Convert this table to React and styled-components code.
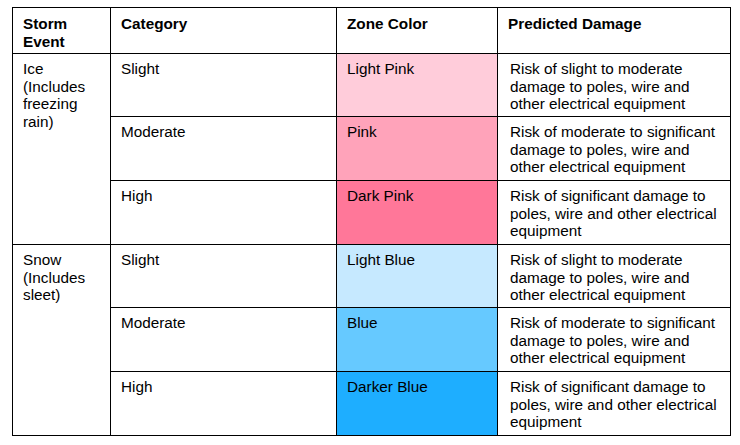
import React from "react";
import styled, { createGlobalStyle } from "styled-components";

const GlobalStyle = createGlobalStyle`
  body {
    margin: 0;
    background: #ffffff;
    font-family: "Liberation Sans", Arial, sans-serif;
    color: #000000;
  }
`;

const rows = [
  {
    event: ["Ice", "(Includes", "freezing", "rain)"],
    items: [
      { category: "Slight", zone: "Light Pink", color: "#ffccda", damage: "Risk of slight to moderate damage to poles, wire and other electrical equipment", h: 63 },
      { category: "Moderate", zone: "Pink", color: "#ffa3ba", damage: "Risk of moderate to significant damage to poles, wire and other electrical equipment", h: 64 },
      { category: "High", zone: "Dark Pink", color: "#ff7799", damage: "Risk of significant damage to poles, wire and other electrical equipment", h: 64 },
    ],
  },
  {
    event: ["Snow", "(Includes", "sleet)"],
    items: [
      { category: "Slight", zone: "Light Blue", color: "#c6e9ff", damage: "Risk of slight to moderate damage to poles, wire and other electrical equipment", h: 63 },
      { category: "Moderate", zone: "Blue", color: "#66c9ff", damage: "Risk of moderate to significant damage to poles, wire and other electrical equipment", h: 64 },
      { category: "High", zone: "Darker Blue", color: "#1eaeff", damage: "Risk of significant damage to poles, wire and other electrical equipment", h: 64 },
    ],
  },
];

export default function App() {
  return (
    <Page>
      <GlobalStyle />
      <Table>
        <colgroup>
          <col style={{ width: 98 }} />
          <col style={{ width: 226 }} />
          <col style={{ width: 161 }} />
          <col style={{ width: 233 }} />
        </colgroup>
        <thead>
          <Row $h={46}>
            <Head>Storm<br />Event</Head>
            <Head>Category</Head>
            <Head>Zone Color</Head>
            <Head>Predicted Damage</Head>
          </Row>
        </thead>
        <tbody>
          {rows.map((group) =>
            group.items.map((item, i) => (
              <Row key={group.event[0] + item.category} $h={item.h}>
                {i === 0 && (
                  <Cell rowSpan={group.items.length}>
                    {group.event.map((line, k) => (
                      <React.Fragment key={k}>
                        {line}
                        {k < group.event.length - 1 && <br />}
                      </React.Fragment>
                    ))}
                  </Cell>
                )}
                <Cell>{item.category}</Cell>
                <Cell $bg={item.color}>{item.zone}</Cell>
                <DamageCell>{item.damage}</DamageCell>
              </Row>
            ))
          )}
        </tbody>
      </Table>
    </Page>
  );
}

const Page = styled.div`
  padding: 7px 0 0 12px;
`;

const Table = styled.table`
  border-collapse: collapse;
  table-layout: fixed;
  width: 718px;
  font-size: 15.3px;
  line-height: 17.5px;
`;

const Row = styled.tr`
  height: ${(p) => p.$h}px;
`;

const Cell = styled.td`
  border: 1px solid #000000;
  padding: 6px 10px 0 10px;
  vertical-align: top;
  background: ${(p) => p.$bg || "transparent"};
`;

const Head = styled(Cell).attrs({ as: "th" })`
  font-weight: bold;
  text-align: left;
  padding-top: 7px;
`;

const DamageCell = styled(Cell)`
  padding-left: 12px;
  padding-right: 4px;
`;
